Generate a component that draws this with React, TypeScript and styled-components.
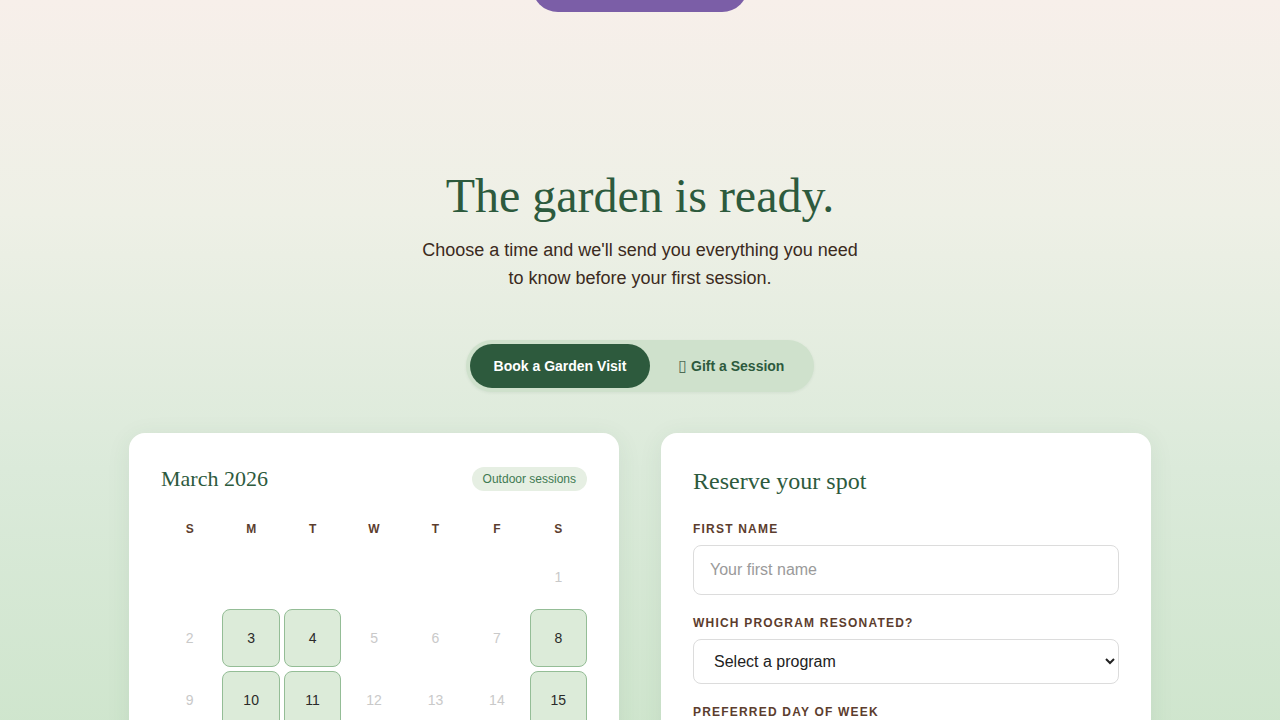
import styled, { createGlobalStyle } from "styled-components";

const GlobalStyle = createGlobalStyle`
  html, body {
    margin: 0;
    padding: 0;
  }
  body {
    font-family: "Liberation Sans", Arial, sans-serif;
    background: linear-gradient(180deg, #f7efea 0%, #eef0e6 25%, #dbeada 55%, #c9e3c7 100%);
    min-height: 100vh;
    overflow: hidden;
  }
  * {
    box-sizing: border-box;
  }
`;

type Day = { n: number | null; open?: boolean };

const days: Day[] = [
  { n: null }, { n: null }, { n: null }, { n: null }, { n: null }, { n: null }, { n: 1 },
  { n: 2 }, { n: 3, open: true }, { n: 4, open: true }, { n: 5 }, { n: 6 }, { n: 7 }, { n: 8, open: true },
  { n: 9 }, { n: 10, open: true }, { n: 11, open: true }, { n: 12 }, { n: 13 }, { n: 14 }, { n: 15, open: true },
  { n: 16 }, { n: 17, open: true }, { n: 18, open: true }, { n: 19 }, { n: 20 }, { n: 21 }, { n: 22, open: true },
];

const weekdays = ["S", "M", "T", "W", "T", "F", "S"];

const App: React.FC = () => {
  return (
    <Page>
      <GlobalStyle />
      <TopBar>
        <PurpleButton aria-label="Start" />
      </TopBar>

      <Hero>
        <Title>The garden is ready.</Title>
        <Subtitle>
          Choose a time and we'll send you everything you need
          <br />
          to know before your first session.
        </Subtitle>

        <Toggle>
          <ToggleButton active>Book a Garden Visit</ToggleButton>
          <ToggleButton>
            <Glyph>▯</Glyph> Gift a Session
          </ToggleButton>
        </Toggle>
      </Hero>

      <Cards>
        <Card>
          <CalHeader>
            <CardTitle size={22}>March 2026</CardTitle>
            <Badge>Outdoor sessions</Badge>
          </CalHeader>
          <WeekRow>
            {weekdays.map((d, i) => (
              <WeekDay key={i}>{d}</WeekDay>
            ))}
          </WeekRow>
          <DayGrid>
            {days.map((d, i) => (
              <DayCell key={i} open={!!d.open}>
                {d.n ?? ""}
              </DayCell>
            ))}
          </DayGrid>
        </Card>

        <Card>
          <CardTitle size={24}>Reserve your spot</CardTitle>
          <Form>
            <Field>
              <Label>First name</Label>
              <Input placeholder="Your first name" />
            </Field>
            <Field>
              <Label>Which program resonated?</Label>
              <Select defaultValue="">
                <option value="">Select a program</option>
                <option>Morning Meditation Walk</option>
                <option>Seed to Table</option>
                <option>Healing Herbs</option>
              </Select>
            </Field>
            <Field>
              <Label>Preferred day of week</Label>
              <Input placeholder="Any day" />
            </Field>
          </Form>
        </Card>
      </Cards>
    </Page>
  );
};

export default App;

const Page = styled.div`
  width: 100%;
  display: flex;
  flex-direction: column;
  align-items: center;
`;

const TopBar = styled.div`
  display: flex;
  justify-content: center;
  margin-top: -40px;
`;

const PurpleButton = styled.div`
  width: 216px;
  height: 52px;
  border-radius: 26px;
  background: #7b5ea7;
`;

const Hero = styled.section`
  display: flex;
  flex-direction: column;
  align-items: center;
  padding-top: 155px;
`;

const Title = styled.h1`
  margin: 0;
  font-family: "Liberation Serif", Georgia, serif;
  font-weight: 400;
  font-size: 48px;
  line-height: 58px;
  color: #2d5a3d;
`;

const Subtitle = styled.p`
  margin: 11px 0 0;
  font-size: 18px;
  line-height: 28px;
  color: #3b2a20;
  text-align: center;
`;

const Toggle = styled.div`
  margin-top: 48px;
  display: flex;
  padding: 4px;
  border-radius: 26px;
  background: #cfe1cc;
  box-shadow: 0 1px 3px rgba(45, 90, 61, 0.08);
`;

const ToggleButton = styled.button<{ active?: boolean }>`
  height: 44px;
  padding: 0 ${(p) => (p.active ? "24px" : "26px")} 0 ${(p) => (p.active ? "24px" : "28px")};
  border: none;
  border-radius: 22px;
  font-family: "Liberation Sans", Arial, sans-serif;
  font-size: 14px;
  font-weight: 700;
  cursor: pointer;
  background: ${(p) => (p.active ? "#2d5a3d" : "transparent")};
  color: ${(p) => (p.active ? "#ffffff" : "#2d5a3d")};
`;

const Glyph = styled.span`
  font-weight: 400;
  font-family: "DejaVu Sans", sans-serif;
  font-size: 16px;
  line-height: 14px;
  color: #4d6b55;
`;

const Cards = styled.div`
  margin-top: 41px;
  width: 1022px;
  display: grid;
  grid-template-columns: 1fr 1fr;
  gap: 42px;
  align-items: start;
`;

const Card = styled.div`
  background: #ffffff;
  border-radius: 16px;
  padding: 32px;
  box-shadow: 0 4px 24px rgba(45, 90, 61, 0.08);
  min-height: 420px;
`;

const CalHeader = styled.div`
  display: flex;
  justify-content: space-between;
  align-items: center;
  margin-bottom: 24px;
`;

const CardTitle = styled.h2<{ size: number }>`
  margin: 0;
  font-family: "Liberation Serif", Georgia, serif;
  font-weight: 400;
  font-size: ${(p) => p.size}px;
  line-height: ${(p) => (p.size === 24 ? 32 : 28)}px;
  color: #2d5a3d;
`;

const Badge = styled.span`
  padding: 5px 11px;
  border-radius: 12px;
  background: #e6efe3;
  color: #3f7a52;
  font-size: 12px;
  line-height: 14px;
`;

const WeekRow = styled.div`
  display: grid;
  grid-template-columns: repeat(7, 1fr);
  gap: 4px;
  margin-bottom: 4px;
`;

const WeekDay = styled.div`
  text-align: center;
  padding: 5px 0 8px;
  font-size: 12px;
  line-height: 14px;
  font-weight: 700;
  color: #5c3d2e;
`;

const DayGrid = styled.div`
  display: grid;
  grid-template-columns: repeat(7, 1fr);
  gap: 4px;
`;

const DayCell = styled.div<{ open: boolean }>`
  aspect-ratio: 1;
  display: flex;
  align-items: center;
  justify-content: center;
  border-radius: 8px;
  font-size: 14px;
  font-weight: ${(p) => (p.open ? 500 : 400)};
  color: ${(p) => (p.open ? "#2a2a2a" : "#c9c9c9")};
  background: ${(p) => (p.open ? "#dcebd9" : "transparent")};
  border: 1px solid ${(p) => (p.open ? "#94bd96" : "transparent")};
`;

const Form = styled.div`
  margin-top: 25px;
  display: flex;
  flex-direction: column;
  gap: 21px;
`;

const Field = styled.div`
  display: flex;
  flex-direction: column;
`;

const Label = styled.label`
  font-size: 12px;
  line-height: 14px;
  font-weight: 700;
  letter-spacing: 1.2px;
  text-transform: uppercase;
  color: #5c3d2e;
  margin-bottom: 9px;
`;

const Input = styled.input`
  height: 50px;
  width: 100%;
  padding: 0 16px;
  border: 1px solid #dcdcdc;
  border-radius: 8px;
  font-family: "Liberation Sans", Arial, sans-serif;
  font-size: 16px;
  color: #222;
  background: #fff;
  &::placeholder {
    color: #9a9a9a;
  }
`;

const Select = styled.select`
  height: 45px;
  width: 100%;
  padding: 0 12px 0 16px;
  border: 1px solid #dcdcdc;
  border-radius: 8px;
  font-family: "Liberation Sans", Arial, sans-serif;
  font-size: 16px;
  color: #222;
  background: #fff;
`;
